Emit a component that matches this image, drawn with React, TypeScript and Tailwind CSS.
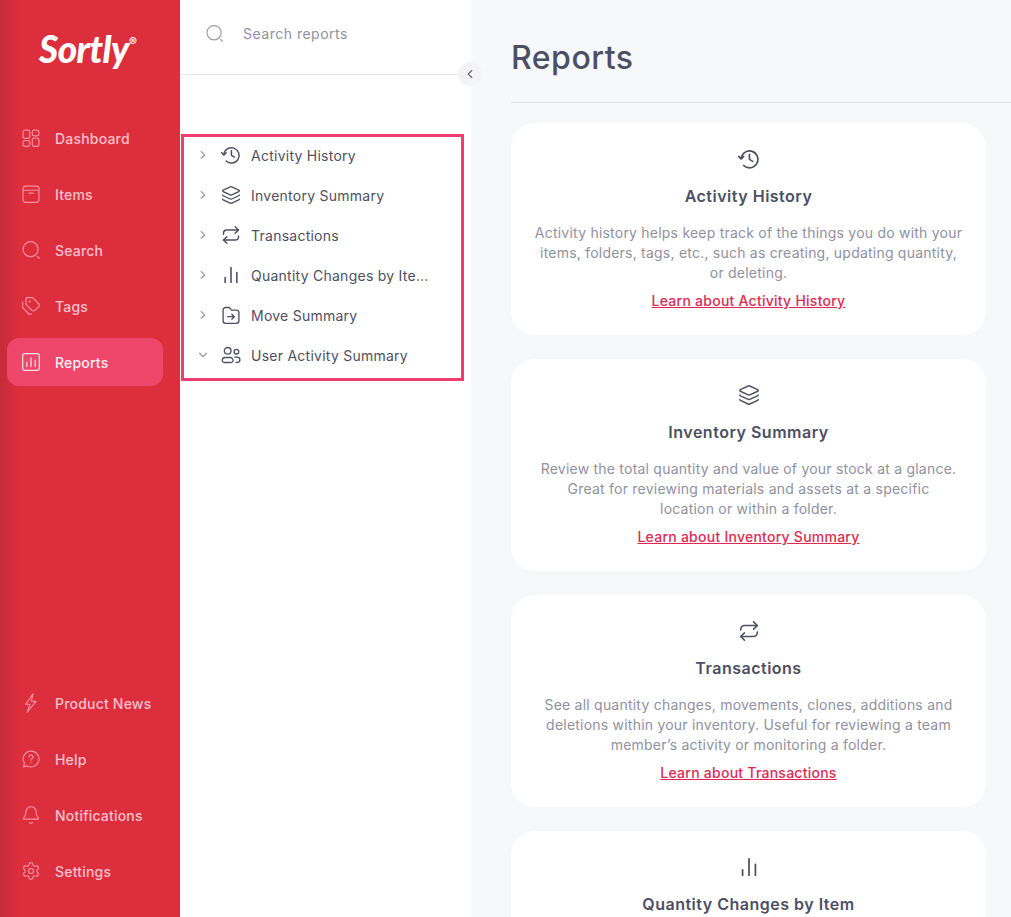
import React from "react";
import { Layers, Repeat, Tags, Bell, Settings, ChevronRight, ChevronDown, ChevronLeft } from "lucide-react";

type P = { className?: string };
const base = { fill: "none", stroke: "currentColor", strokeLinecap: "round" as const, strokeLinejoin: "round" as const, viewBox: "0 0 24 24" };

const Grid = ({ className }: P) => (
  <svg {...base} strokeWidth={1.4} className={className}>
    <rect x="2.5" y="2.5" width="8" height="10" rx="2.5" />
    <rect x="13.5" y="2.5" width="8" height="7" rx="2.5" />
    <rect x="2.5" y="15" width="8" height="7" rx="2.5" />
    <rect x="13.5" y="12" width="8" height="10" rx="2.5" />
  </svg>
);
const Box = ({ className }: P) => (
  <svg {...base} strokeWidth={1.4} className={className}>
    <rect x="2.5" y="2.5" width="19" height="19.5" rx="3" />
    <path d="M2.5 7.5h19M9.5 11h5" />
  </svg>
);
const ReportIcon = ({ className }: P) => (
  <svg {...base} strokeWidth={1.5} className={className}>
    <rect x="2" y="2" width="20" height="20" rx="2.5" />
    <path d="M7 12.5v5M12 7v10.5M17 10v7.5" />
  </svg>
);
const HelpIcon = ({ className }: P) => (
  <svg {...base} strokeWidth={1.4} className={className}>
    <path d="M12 2.5a9.5 9.5 0 1 1-4.6 17.8L3 21.5l1.2-4.4A9.5 9.5 0 0 1 12 2.5Z" />
    <path d="M9.7 9.5a2.4 2.4 0 1 1 3.7 2c-.9.6-1.4 1.1-1.4 2" />
    <path d="M12 16.4v.1" />
  </svg>
);
const Loupe = ({ className }: P) => (
  <svg {...base} strokeWidth={1.4} className={className}>
    <circle cx="11.5" cy="11" r="9" />
    <path d="M19.5 19.5 22 22" />
  </svg>
);
const Bolt = ({ className }: P) => (
  <svg {...base} strokeWidth={1.4} className={className}>
    <path d="M14.5 1 5.5 13.5h5.2L7.5 23l10.5-13h-5.6Z" />
  </svg>
);
const Clock = ({ className }: P) => (
  <svg {...base} strokeWidth={1.8} className={className}>
    <path d="M3.4 11.5a9.2 9.2 0 1 1 2.9 7.7" />
    <path d="M.8 9.2l2.6 2.7 2.8-2.6" />
    <path d="M12.5 6.8v5.6l3.6 2.2" />
  </svg>
);
const Bars = ({ className }: P) => (
  <svg {...base} strokeWidth={1.9} className={className}>
    <path d="M5 21v-6M12 21V3M19 21V9" />
  </svg>
);
const FolderMove = ({ className }: P) => (
  <svg {...base} strokeWidth={1.6} className={className}>
    <path d="M2.5 6a3 3 0 0 1 3-3h3.4c.8 0 1.5.4 2 1l1.2 1.6c.3.3.7.5 1.1.5h5.3a3 3 0 0 1 3 3V19a3 3 0 0 1-3 3h-13a3 3 0 0 1-3-3Z" />
    <path d="M8 14h8M13 11l3 3-3 3" />
  </svg>
);
const People = ({ className }: P) => (
  <svg {...base} strokeWidth={1.6} className={className}>
    <circle cx="8" cy="7" r="4" />
    <circle cx="18.5" cy="8" r="2.8" />
    <path d="M1.5 18.5a3.5 3.5 0 0 1 3.5-3.5h6a3.5 3.5 0 0 1 3.5 3.5 2.5 2.5 0 0 1-2.5 2.5H4a2.5 2.5 0 0 1-2.5-2.5Z" />
    <path d="M16.5 14.5h3a3.2 3.2 0 0 1 0 6.4h-1.5" />
  </svg>
);
const LayersIcon = ({ className }: P) => <Layers className={className} strokeWidth={1.6} />;
const RepeatIcon = ({ className }: P) => <Repeat className={className} strokeWidth={1.7} />;
const TagsIcon = ({ className }: P) => <Tags className={className} strokeWidth={1.4} />;
const BellIcon = ({ className }: P) => <Bell className={className} strokeWidth={1.4} />;
const GearIcon = ({ className }: P) => <Settings className={className} strokeWidth={1.4} />;

const topNav = [
  { label: "Dashboard", Icon: Grid },
  { label: "Items", Icon: Box },
  { label: "Search", Icon: Loupe },
  { label: "Tags", Icon: TagsIcon },
  { label: "Reports", Icon: ReportIcon, active: true },
];
const bottomNav = [
  { label: "Product News", Icon: Bolt },
  { label: "Help", Icon: HelpIcon },
  { label: "Notifications", Icon: BellIcon },
  { label: "Settings", Icon: GearIcon },
];

const NavItem = ({ label, Icon, active }: { label: string; Icon: React.ComponentType<P>; active?: boolean }) => (
  <div className={`flex h-12 items-center gap-[14px] rounded-xl pl-[14px] text-[14px] font-medium tracking-[0.2px] ${active ? "bg-[#ee476b] text-[#fff0f3]" : "text-[#fbc0cc]"}`}>
    <Icon className={`h-5 w-5 shrink-0 ${active ? "text-[#ffe0e7]" : "text-[#f9909f]"}`} />
    <span>{label}</span>
  </div>
);

const tree = [
  { label: "Activity History", Icon: Clock },
  { label: "Inventory Summary", Icon: LayersIcon },
  { label: "Transactions", Icon: RepeatIcon },
  { label: "Quantity Changes by Ite…", Icon: Bars },
  { label: "Move Summary", Icon: FolderMove },
  { label: "User Activity Summary", Icon: People, open: true },
];

const cards = [
  {
    title: "Activity History",
    Icon: Clock,
    lines: ["Activity history helps keep track of the things you do with your", "items, folders, tags, etc., such as creating, updating quantity,", "or deleting."],
    link: "Learn about Activity History",
  },
  {
    title: "Inventory Summary",
    Icon: LayersIcon,
    lines: ["Review the total quantity and value of your stock at a glance.", "Great for reviewing materials and assets at a specific", "location or within a folder."],
    link: "Learn about Inventory Summary",
  },
  {
    title: "Transactions",
    Icon: RepeatIcon,
    lines: ["See all quantity changes, movements, clones, additions and", "deletions within your inventory. Useful for reviewing a team", "member’s activity or monitoring a folder."],
    link: "Learn about Transactions",
  },
  { title: "Quantity Changes by Item", Icon: Bars, lines: [], link: "" },
];

export default function App() {
  return (
    <div className="flex h-[917px] w-[1011px] overflow-hidden bg-white font-['Inter','Liberation_Sans',sans-serif]">
      <aside className="flex w-[180px] shrink-0 flex-col justify-between bg-[linear-gradient(90deg,#c52b3a_0px,#dd2e3d_20px)] pb-[22px] pl-[7px] pr-[17px]">
        <div>
          <div className="flex h-[114px] items-start justify-center pl-[6px] pt-[27px] text-white">
            <span className="font-['Lato',sans-serif] text-[37px] font-black italic leading-[44px] tracking-[-0.5px]">Sortly</span>
            <span className="mt-[9px] text-[12px] font-bold leading-none">®</span>
          </div>
          <nav className="flex flex-col gap-2">
            {topNav.map((n) => <NavItem key={n.label} {...n} />)}
          </nav>
        </div>
        <nav className="flex flex-col gap-2">
          {bottomNav.map((n) => <NavItem key={n.label} {...n} />)}
        </nav>
      </aside>

      <section className="relative w-[291px] shrink-0">
        <div className="flex h-[75px] items-center gap-[19px] border-b border-[#e6e6ee] pb-[7px] pl-[25px]">
          <Loupe className="h-[19px] w-[19px] text-[#9a9aaa]" />
          <span className="text-[14px] tracking-[0.5px] text-[#92929f]">Search reports</span>
        </div>
        <div className="relative mt-[60px] pl-[16px]">
          {tree.map(({ label, Icon, open }) => (
            <div key={label} className="flex h-10 items-center text-[14px] tracking-[0.25px] text-[#4f4f63]">
              {open ? <ChevronDown className="h-3.5 w-3.5 text-[#9b9ba8]" /> : <ChevronRight className="h-3.5 w-3.5 text-[#9b9ba8]" />}
              <Icon className="ml-[11px] h-5 w-5 shrink-0 text-[#4f4f63]" />
              <span className="ml-[10px] whitespace-nowrap">{label}</span>
            </div>
          ))}
          <div className="absolute left-px top-[-1px] h-[247px] w-[283px] border-[3px] border-[#f13c70]" />
        </div>
        <div className="absolute left-[278px] top-[62px] z-10 flex h-[24px] w-[24px] items-center justify-center rounded-full bg-[#f4f4f7] pr-[1px]">
          <ChevronLeft className="h-3.5 w-3.5 text-[#6b6b7b]" strokeWidth={2} />
        </div>
      </section>

      <main className="min-w-0 flex-1 overflow-hidden bg-[#f7f8fa] pl-10">
        <h1 className="flex h-[103px] items-start border-b border-[#dedee6] pt-[36px] text-[32px] font-medium leading-[44px] tracking-[0.5px] text-[#4d4f63]">Reports</h1>
        <div className="flex w-[475px] flex-col gap-6 pt-5">
          {cards.map(({ title, Icon, lines, link }) => (
            <article key={title} className="flex h-[212px] shrink-0 flex-col items-center rounded-3xl bg-white pt-[25px] text-center">
              <Icon className="h-[22px] w-[22px] text-[#4f4f63]" />
              <h2 className="mt-[14px] text-[16px] font-semibold leading-6 tracking-[0.5px] text-[#4d4f63]">{title}</h2>
              <p className="mt-[15px] text-[14px] leading-5 tracking-[0.22px] text-[#9191a0]">
                {lines.map((l) => <span key={l} className="block">{l}</span>)}
              </p>
              {link && <a className="mt-2 text-[14px] font-medium leading-5 tracking-[0.25px] text-[#de2a52] underline">{link}</a>}
            </article>
          ))}
        </div>
      </main>
    </div>
  );
}
